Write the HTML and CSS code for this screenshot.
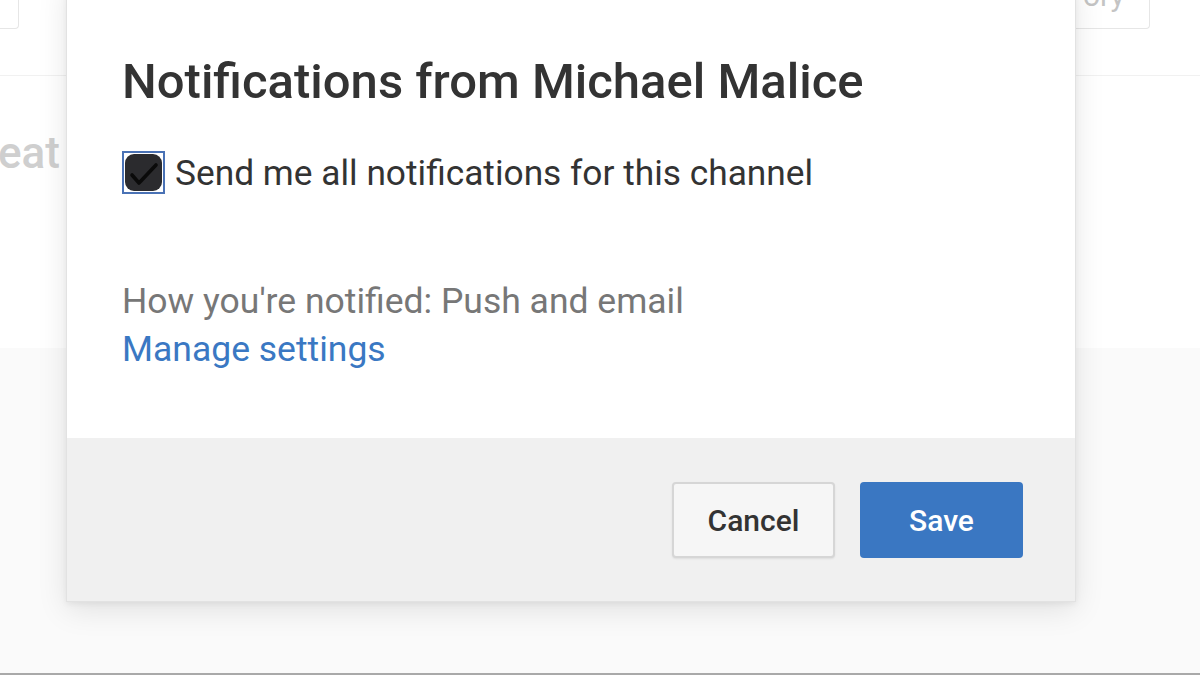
FILE: index.html
```html
<!DOCTYPE html>
<html>
<head>
<meta charset="utf-8">
<link rel="stylesheet" href="styles.css">
</head>
<body>
<div class="page">
  <div class="top">
    <div class="chip chip-left"></div>
    <div class="chip chip-right"><span>ory</span></div>
  </div>
  <div class="middle">
    <span class="ghost">eat</span>
  </div>
  <div class="lower"></div>
</div>

<div class="dialog">
  <div class="dialog-body">
    <h1 class="title">Notifications from Michael Malice</h1>
    <label class="check-row">
      <span class="check">
        <span class="check-inner">
          <svg viewBox="0 0 36 36" width="36" height="36"><path d="M6 20 L13 28 L30 10" fill="none" stroke="#0a0a0a" stroke-width="3.6" stroke-linecap="round" stroke-linejoin="round"/></svg>
        </span>
      </span>
      <span class="check-label">Send me all notifications for this channel</span>
    </label>
    <p class="how">How you're notified: Push and email</p>
    <a class="manage" href="#">Manage settings</a>
  </div>
  <div class="dialog-foot">
    <button class="btn btn-cancel">Cancel</button>
    <button class="btn btn-save">Save</button>
  </div>
</div>
</body>
</html>
```

FILE: styles.css
```css
* { box-sizing: border-box; }
html, body { margin: 0; padding: 0; }
body {
  width: 1200px;
  height: 675px;
  overflow: hidden;
  font-family: Roboto, "Liberation Sans", sans-serif;
  background: #fff;
  position: relative;
}
.page {
  display: flex;
  flex-direction: column;
  height: 675px;
  border-bottom: 2px solid #a9a9a9;
}
.top {
  height: 76px;
  border-bottom: 1px solid #f1f1f1;
  display: flex;
  justify-content: space-between;
  align-items: flex-start;
}
.chip {
  height: 29px;
  border: 1px solid #e6e6e6;
  border-top: none;
  border-radius: 0 0 4px 4px;
  overflow: hidden;
}
.chip-left { width: 19px; border-left: none; border-radius: 0 0 4px 0; }
.chip-right {
  width: 80px;
  margin-right: 50px;
  position: relative;
}
.chip-right span {
  position: absolute;
  left: 12px;
  top: -22px;
  font-size: 30px;
  color: #c4c4c4;
}
.middle {
  height: 272px;
  padding-top: 52px;
  line-height: 50px;
}
.ghost {
  font-size: 44px;
  color: #cfcfcf;
  margin-left: -2px;
  font-weight: 500;
}
.lower {
  flex: 1;
  background: #fafafa;
}

.dialog {
  position: absolute;
  left: 66px;
  top: -20px;
  width: 1010px;
  height: 622px;
  background: #fff;
  border: 1px solid #e2e2e2;
  box-shadow: 0 8px 28px rgba(0,0,0,0.10), 0 2px 6px rgba(0,0,0,0.06);
  display: flex;
  flex-direction: column;
}
.dialog-body {
  height: 457px;
  padding: 73px 55px 0;
}
.title {
  margin: 0;
  font-size: 49px;
  line-height: 56px;
  font-weight: 500;
  color: #333;
  letter-spacing: 0;
}
.check-row {
  display: flex;
  align-items: center;
  margin-top: 41px;
}
.check {
  width: 43px;
  height: 43px;
  border: 2px solid #4a72b5;
  padding: 1px;
  display: flex;
}
.check-inner {
  flex: 1;
  background: #2b2b2e;
  border-radius: 9px;
  display: flex;
  align-items: center;
  justify-content: center;
}
.check-label {
  margin-left: 10px;
  font-size: 35.3px;
  color: #333;
}
.how {
  margin: 83px 0 0;
  font-size: 35.5px;
  line-height: 48px;
  color: #777;
}
.manage {
  display: block;
  font-size: 35.5px;
  line-height: 48px;
  color: #3a78c3;
  text-decoration: none;
}
.dialog-foot {
  flex: 1;
  background: #f0f0f0;
  display: flex;
  justify-content: flex-end;
  align-items: flex-start;
  gap: 25px;
  padding: 44px 52px 0 0;
}
.btn {
  width: 163px;
  height: 76px;
  border-radius: 4px;
  font-family: Roboto, "Liberation Sans", sans-serif;
  font-size: 30px;
  font-weight: 500;
}
.btn-cancel {
  background: #f6f6f6;
  border: 2px solid #d6d6d6;
  box-shadow: 0 1px 2px rgba(0,0,0,0.08);
  color: #333;
}
.btn-save {
  background: #3a77c2;
  border: none;
  color: #fff;
}
```
